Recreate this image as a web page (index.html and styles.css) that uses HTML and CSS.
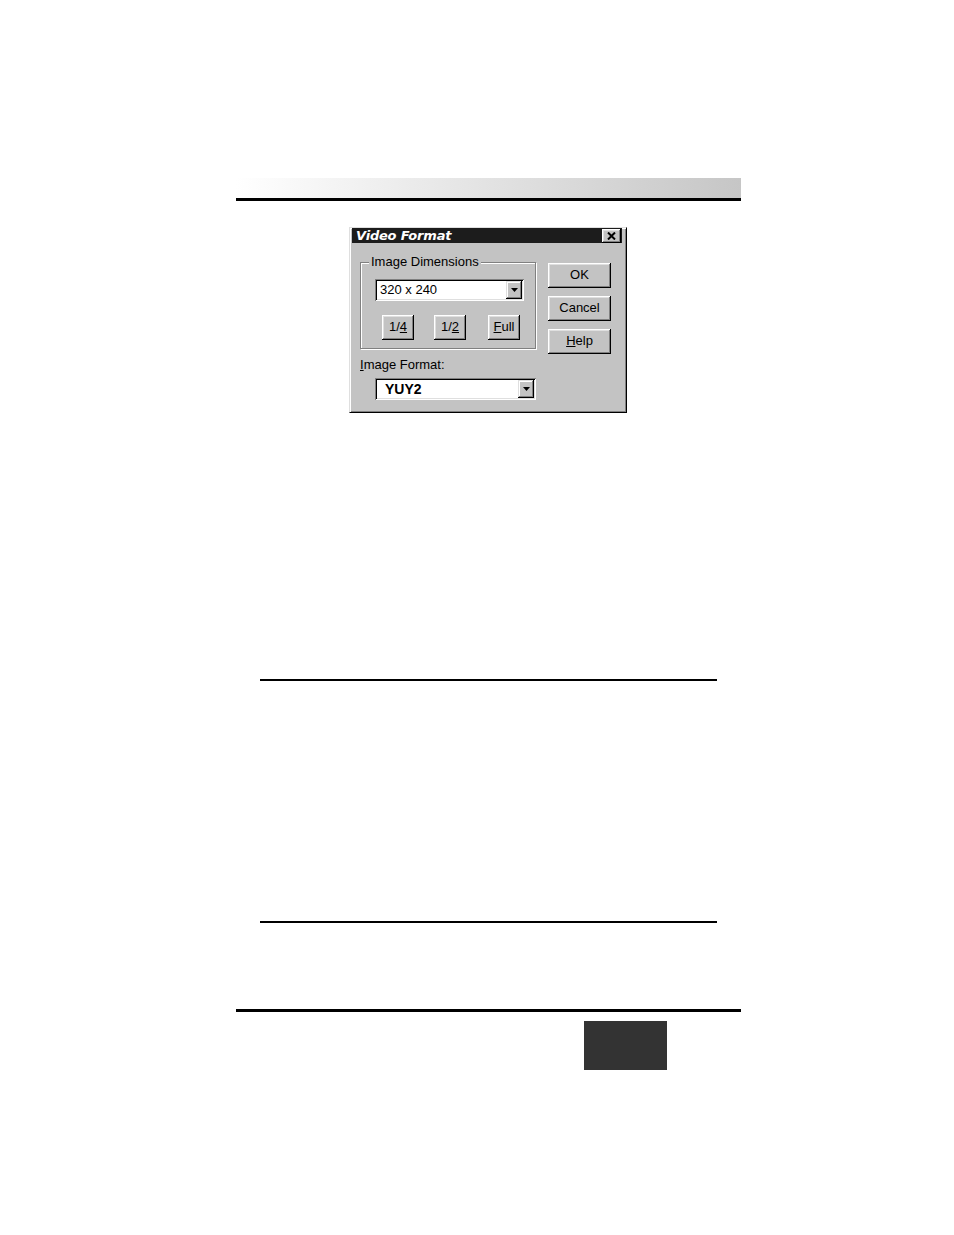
FILE: index.html
```html
<!DOCTYPE html>
<html>
<head>
<meta charset="utf-8">
<title>Video Format</title>
<link rel="stylesheet" href="styles.css">
</head>
<body>
<div class="page">
  <div class="header-bar"></div>

  <div class="dialog">
    <div class="titlebar">
      <span class="title">Video Format</span>
      <span class="close">
        <svg width="9" height="8" viewBox="0 0 9 8"><path d="M1 0.5 L8 7.5 M8 0.5 L1 7.5" stroke="#000" stroke-width="2" fill="none"/></svg>
      </span>
    </div>
    <div class="dlg-body">
      <div class="left">
        <div class="group">
          <span class="group-label">Image Dimensions</span>
          <div class="combo dims">
            <span class="combo-text">320 x 240</span>
            <span class="drop"><svg width="7" height="4" viewBox="0 0 7 4"><path d="M0 0 H7 L3.5 4 Z" fill="#000"/></svg></span>
          </div>
          <div class="size-btns">
            <div class="btn small">1/<u>4</u></div>
            <div class="btn small">1/<u>2</u></div>
            <div class="btn small"><u>F</u>ull</div>
          </div>
        </div>
        <div class="fmt-label"><u>I</u>mage Format:</div>
        <div class="combo fmt">
          <span class="combo-text bold">YUY2</span>
          <span class="drop"><svg width="7" height="4" viewBox="0 0 7 4"><path d="M0 0 H7 L3.5 4 Z" fill="#000"/></svg></span>
        </div>
      </div>
      <div class="right">
        <div class="btn wide">OK</div>
        <div class="btn wide">Cancel</div>
        <div class="btn wide"><u>H</u>elp</div>
      </div>
    </div>
  </div>

  <div class="rule r1"></div>
  <div class="rule r2"></div>
  <div class="footer-bar"></div>
  <div class="page-tab"></div>
</div>
</body>
</html>
```

FILE: styles.css
```css
html, body {
  margin: 0;
  padding: 0;
  background: #fff;
}
body {
  font-family: "Liberation Sans", Arial, sans-serif;
  color: #000;
}
.page {
  padding-top: 1px;
}
.header-bar {
  margin: 177px 0 0 236px;
  width: 505px;
  height: 20px;
  background: linear-gradient(to right, #ffffff, #c6c6c6);
  border-bottom: 3px solid #000;
}

/* dialog */
.dialog {
  margin: 26px 0 0 349px;
  width: 278px;
  height: 186px;
  box-sizing: border-box;
  background: #c3c3c3;
  border: 1px solid;
  border-color: #dfdfdf #000 #000 #dfdfdf;
  box-shadow: inset 1px 1px #fff, inset -1px -1px #808080;
  padding: 0 4px 0 2px;
}
.titlebar {
  height: 15px;
  background: #1c1c1c;
  display: flex;
  align-items: center;
  justify-content: space-between;
  padding: 0 1px 0 4px;
}
.title {
  color: #fff;
  font: italic bold 13px "DejaVu Sans", sans-serif;
  line-height: 15px;
  letter-spacing: -0.2px;
}
.close {
  width: 19px;
  height: 14px;
  box-sizing: border-box;
  background: #c3c3c3;
  box-shadow: inset -1px -1px #000, inset 1px 1px #fff, inset -2px -2px #808080, inset 2px 2px #dfdfdf;
  display: flex;
  align-items: center;
  justify-content: center;
}
.dlg-body {
  display: flex;
  padding-left: 8px;
}
.left {
  width: 176px;
  padding-top: 19px;
}
.group {
  position: relative;
  height: 87px;
  box-sizing: border-box;
  border: 1px solid #808080;
  box-shadow: inset 1px 1px #fff, 1px 1px #fff;
  padding: 16px 0 0 14px;
}
.group-label {
  position: absolute;
  top: -9px;
  left: 8px;
  padding: 0 2px;
  background: #c3c3c3;
  font-size: 13px;
  line-height: 16px;
}
.combo {
  box-sizing: border-box;
  height: 22px;
  background: #fff;
  box-shadow: inset 1px 1px #808080, inset -1px -1px #fff, inset 2px 2px #000, inset -2px -2px #dfdfdf;
  display: flex;
  align-items: stretch;
  padding: 2px;
}
.combo.dims {
  width: 149px;
}
.combo-text {
  flex: 1;
  padding-left: 3px;
  font-size: 13px;
  line-height: 18px;
}
.combo-text.bold {
  font-weight: bold;
  font-size: 14px;
  padding-left: 8px;
}
.drop {
  width: 16px;
  box-sizing: border-box;
  background: #c3c3c3;
  box-shadow: inset -1px -1px #000, inset 1px 1px #dfdfdf, inset -2px -2px #808080, inset 2px 2px #fff;
  display: flex;
  align-items: center;
  justify-content: center;
}
.size-btns {
  display: flex;
  margin-top: 14px;
  padding-left: 7px;
  gap: 20px;
}
.size-btns .btn:last-child {
  margin-left: 2px;
}
.btn {
  box-sizing: border-box;
  height: 25px;
  padding-bottom: 2px;
  background: #c3c3c3;
  box-shadow: inset -1px -1px #000, inset 1px 1px #fff, inset -2px -2px #808080, inset 2px 2px #dfdfdf;
  display: flex;
  align-items: center;
  justify-content: center;
  font-size: 13px;
  line-height: 15px;
}
.btn.small {
  width: 32px;
}
.btn.wide {
  width: 63px;
}
.fmt-label {
  margin-top: 8px;
  font-size: 13px;
  line-height: 15px;
}
.combo.fmt {
  margin: 6px 0 0 15px;
  width: 161px;
}
.right {
  margin-left: 12px;
  padding-top: 20px;
  display: flex;
  flex-direction: column;
  gap: 8px;
}

/* page rules */
.rule {
  height: 2px;
  background: #000;
  margin-left: 260px;
  width: 457px;
}
.r1 {
  margin-top: 266px;
}
.r2 {
  margin-top: 240px;
}
.footer-bar {
  margin: 86px 0 0 236px;
  width: 505px;
  height: 3px;
  background: #000;
}
.page-tab {
  margin: 9px 0 0 584px;
  width: 83px;
  height: 49px;
  background: #333;
}
```
